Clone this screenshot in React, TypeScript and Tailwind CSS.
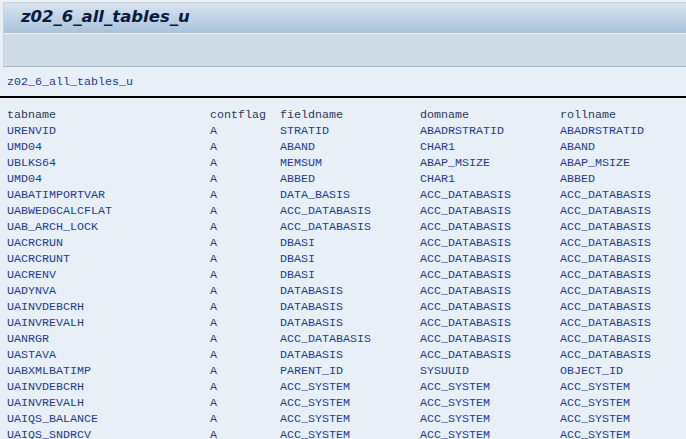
const rows: string[][] = [
  ["URENVID", "A", "STRATID", "ABADRSTRATID", "ABADRSTRATID"],
  ["UMD04", "A", "ABAND", "CHAR1", "ABAND"],
  ["UBLKS64", "A", "MEMSUM", "ABAP_MSIZE", "ABAP_MSIZE"],
  ["UMD04", "A", "ABBED", "CHAR1", "ABBED"],
  ["UABATIMPORTVAR", "A", "DATA_BASIS", "ACC_DATABASIS", "ACC_DATABASIS"],
  ["UABWEDGCALCFLAT", "A", "ACC_DATABASIS", "ACC_DATABASIS", "ACC_DATABASIS"],
  ["UAB_ARCH_LOCK", "A", "ACC_DATABASIS", "ACC_DATABASIS", "ACC_DATABASIS"],
  ["UACRCRUN", "A", "DBASI", "ACC_DATABASIS", "ACC_DATABASIS"],
  ["UACRCRUNT", "A", "DBASI", "ACC_DATABASIS", "ACC_DATABASIS"],
  ["UACRENV", "A", "DBASI", "ACC_DATABASIS", "ACC_DATABASIS"],
  ["UADYNVA", "A", "DATABASIS", "ACC_DATABASIS", "ACC_DATABASIS"],
  ["UAINVDEBCRH", "A", "DATABASIS", "ACC_DATABASIS", "ACC_DATABASIS"],
  ["UAINVREVALH", "A", "DATABASIS", "ACC_DATABASIS", "ACC_DATABASIS"],
  ["UANRGR", "A", "ACC_DATABASIS", "ACC_DATABASIS", "ACC_DATABASIS"],
  ["UASTAVA", "A", "DATABASIS", "ACC_DATABASIS", "ACC_DATABASIS"],
  ["UABXMLBATIMP", "A", "PARENT_ID", "SYSUUID", "OBJECT_ID"],
  ["UAINVDEBCRH", "A", "ACC_SYSTEM", "ACC_SYSTEM", "ACC_SYSTEM"],
  ["UAINVREVALH", "A", "ACC_SYSTEM", "ACC_SYSTEM", "ACC_SYSTEM"],
  ["UAIQS_BALANCE", "A", "ACC_SYSTEM", "ACC_SYSTEM", "ACC_SYSTEM"],
  ["UAIQS_SNDRCV", "A", "ACC_SYSTEM", "ACC_SYSTEM", "ACC_SYSTEM"],
];

const header = ["tabname", "contflag", "fieldname", "domname", "rollname"];

// column widths in px (7px per monospace char)
const Row = ({ cells, head }: { cells: string[]; head?: boolean }) => (
  <div className={`flex h-4 items-center whitespace-pre ${head ? "text-[#2b3a55]" : "text-[#1d3c8f]"}`}>
    <div className="w-[203px]">{cells[0]}</div>
    <div className="w-[70px]">{cells[1]}</div>
    <div className="w-[140px]">{cells[2]}</div>
    <div className="w-[140px]">{cells[3]}</div>
    <div>{cells[4]}</div>
  </div>
);

export default function App() {
  return (
    <div className="h-[439px] w-[686px] overflow-hidden bg-[#e9eff7]">
      <div className="h-[2px] bg-[#eef2f6]" />
      <div className="ml-[3px] border-t border-l border-[#c5cfda] bg-gradient-to-b from-[#d8e4f0] to-[#aac2da]">
        <div className="flex h-[30px] items-center pb-[2px] pl-[17px]">
          <span
            className="text-[16.5px] font-bold italic leading-none text-[#0b1b3d]"
            style={{ fontFamily: "Tahoma, 'DejaVu Sans', sans-serif" }}
          >
            z02_6_all_tables_u
          </span>
        </div>
      </div>
      <div className="ml-[3px] h-[34px] border-t border-b border-l border-t-[#eaf0f6] border-b-[#a2b5c8] border-l-[#c5cfda] bg-[#cfdce7]" />
      <div className="text-[11.67px]" style={{ fontFamily: "'Liberation Mono', 'Courier New', monospace" }}>
        <div className="flex h-[29px] items-center pl-[7px] pt-[2px] text-[#1d3c8f]">z02_6_all_tables_u</div>
        <div className="h-[2px] bg-black" />
        <div className="pl-[7px] pt-[10px]">
          <Row cells={header} head />
          {rows.map((r, i) => (
            <Row key={i} cells={r} />
          ))}
        </div>
      </div>
    </div>
  );
}
